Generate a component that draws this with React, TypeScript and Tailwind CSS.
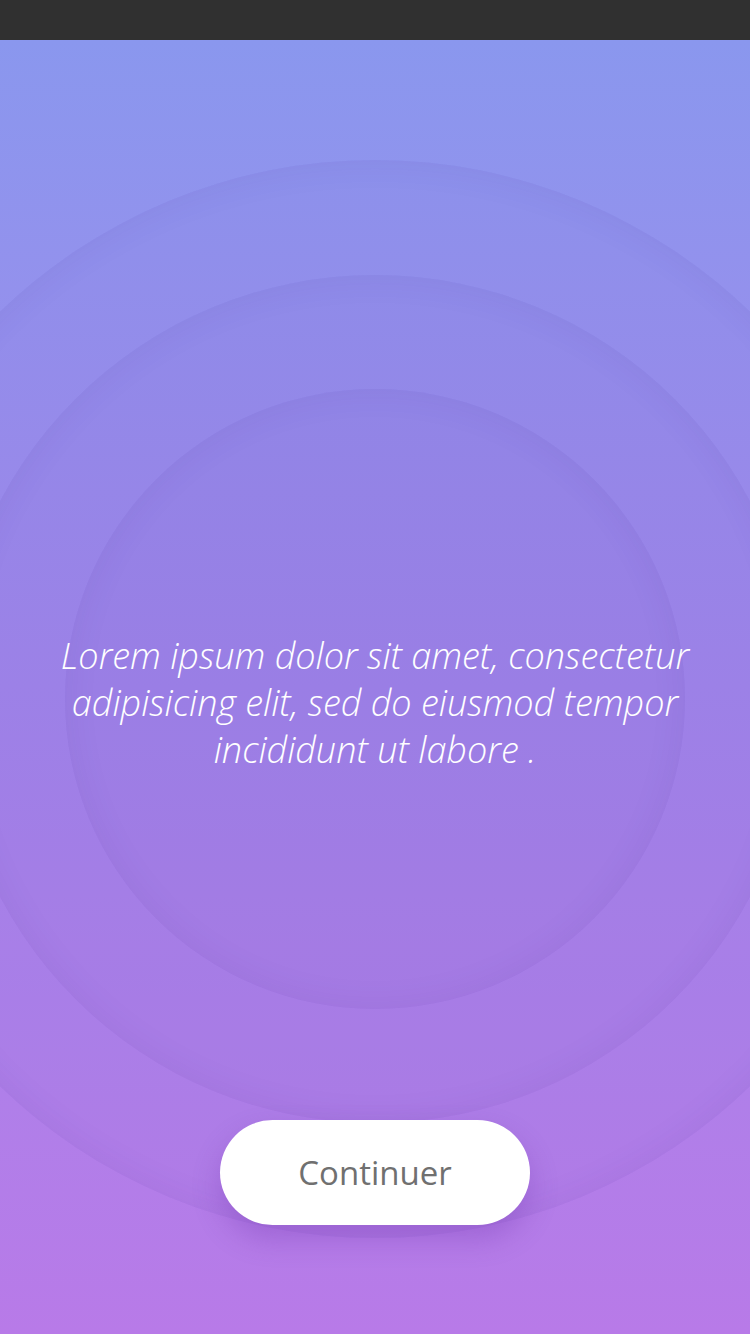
import React from "react";

const Ring: React.FC<{ size: string }> = ({ size }) => (
  <div
    className={`absolute left-1/2 -translate-x-1/2 rounded-full bg-[rgba(70,40,150,0.025)] shadow-[inset_0_0_34px_rgba(60,40,140,0.08)] ${size}`}
  />
);

const App: React.FC = () => {
  return (
    <div className="w-[750px] h-[1334px] flex flex-col font-['Open_Sans',sans-serif]">
      {/* status bar */}
      <div className="h-[40px] bg-[#303030] shrink-0" />

      <main className="relative flex-1 overflow-hidden bg-gradient-to-b from-[#8a97ee] via-[#a087eb] to-[#b87ae8] flex flex-col items-center">
        {/* background rings */}
        <Ring size="w-[1078px] h-[1078px] top-[120px]" />
        <Ring size="w-[848px] h-[848px] top-[235px]" />
        <Ring size="w-[620px] h-[620px] top-[349px]" />

        <p className="relative mt-[592px] px-[40px] text-center text-white italic font-light text-[36px] leading-[47px]">
          Lorem ipsum dolor sit amet, consectetur adipisicing elit, sed do eiusmod tempor incididunt ut labore .
        </p>

        <button className="relative mt-[347px] w-[310px] h-[105px] rounded-full bg-white text-[#707070] text-[33px] shadow-[0_14px_28px_rgba(110,50,170,0.3)]">
          Continuer
        </button>
      </main>
    </div>
  );
};

export default App;
